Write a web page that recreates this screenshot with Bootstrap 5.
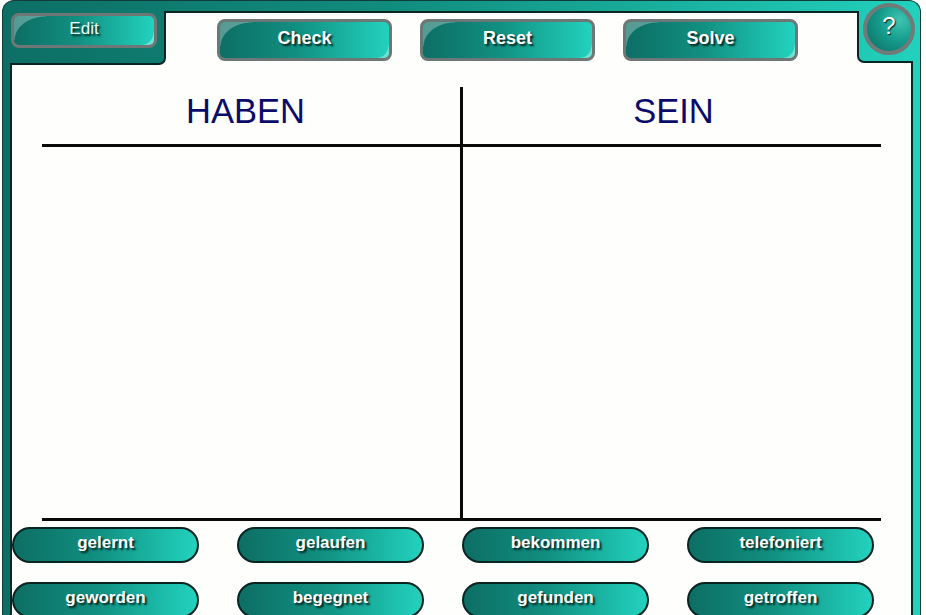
<!DOCTYPE html>
<html>

<head>
  <meta charset="utf-8">
  <meta name="viewport" content="width=device-width">
  <title>Haben oder Sein</title>
  <link href="https://cdn.jsdelivr.net/npm/bootstrap@5.3.3/dist/css/bootstrap.min.css" rel="stylesheet" />
  <style>
    html, body { height: 615px; overflow: hidden; background: #fefefc; }
    body { font-family: "Liberation Sans", Arial, sans-serif; }
    .teal-fill { background: linear-gradient(90deg, #0d6e65 0%, #118f80 45%, #22d2be 100%) fixed; }
    .game-frame { width: 919px; height: 615px; margin-left: 2px; padding: 10px 0 0 7px; border: 1px solid #123c38; border-bottom: 0; border-radius: 12px 12px 0 0; overflow: hidden; }
    .game-panel { width: 903px; height: 605px; background: #fefefc; border: 2px solid #0b2523; border-bottom: 0; }
    .tab-left { width: 156px; height: 54px; margin: -2px 0 0 -2px; padding: 2px 0 0 1px; border: solid #0b2523; border-width: 0 2px 2px 0; border-bottom-right-radius: 7px; }
    .tab-right { width: 56px; height: 52px; margin: -2px -2px 0 auto; border: solid #0b2523; border-width: 0 0 2px 2px; border-bottom-left-radius: 7px; position: relative; }
    .btn-row { padding: 6px 0 0 51px; gap: 28px; }
    .glossy { position: relative; background: linear-gradient(90deg, #0d6e65 0%, #118f80 45%, #22d2be 100%); border: 3px solid #6d7876; border-radius: 8px; color: #fff; width: 175px; height: 42px; font-size: 18px; font-weight: 700; line-height: 22px; text-align: center; text-shadow: 2px 2px 2px #02221f; padding: 0 0 4px; }
    .glossy:hover { color: #fff; }
    .glossy::before { content: ""; position: absolute; left: 0; top: 0; width: 32px; height: 24px; border-top-left-radius: 5px; background: radial-gradient(ellipse 100% 100% at 100% 100%, transparent 96%, rgba(255, 255, 255, .3) 100%); }
    .glossy::after { content: ""; position: absolute; right: 0; bottom: 0; width: 11px; height: 14px; border-bottom-right-radius: 5px; background: radial-gradient(ellipse 100% 100% at 0 0, transparent 94%, rgba(255, 255, 255, .35) 100%); }
    .glossy-edit { width: 146px; height: 35px; font-size: 17px; font-weight: 400; color: #e4fbf7; }
    .help-btn { position: absolute; top: -8px; left: 4px; width: 52px; height: 52px; border: 4px solid #707a79; border-radius: 50%; background: radial-gradient(circle at 75% 30%, #3fc4b2 0%, #159c8c 45%, #0c6a62 100%); color: #fff; font-size: 24px; font-weight: 400; line-height: 28px; padding: 0 0 6px; text-align: center; text-shadow: 1px 1px 1px #02221f; }
    .help-btn:hover { color: #fff; }
    .chart-grid { display: grid; grid-template-columns: 419px 420px; grid-template-rows: 60px 371px; width: 839px; margin: 22px 0 0 30px; border-bottom: 3px solid #0a0a0a; }
    .chart-head { border-bottom: 3px solid #0a0a0a; color: #0b0b6b; font-size: 34.5px; line-height: 48px; text-align: center; }
    .chart-head-left { padding-right: 12px; }
    .chart-head-right { padding-left: 3px; }
    .chart-split { border-left: 3px solid #0a0a0a; margin-left: -1px; }
    .word-grid { display: grid; grid-template-columns: repeat(4, 187px); gap: 19px 38px; margin: 6px 0 0 0; }
    .word-chip { height: 36px; background: linear-gradient(90deg, #0d6e65 0%, #118f80 45%, #22d2be 100%); border: 2px solid #0a2422; border-radius: 18px; color: #fff; font-size: 17px; font-weight: 700; line-height: 22px; text-align: center; text-shadow: 2px 2px 2px #02221f; padding: 0 0 4px; }
    .word-chip:hover { color: #fff; }
  </style>
</head>

<body>

  <div class="game-frame teal-fill">
    <div class="game-panel">
      <div class="d-flex">
        <div class="tab-left teal-fill">
          <button class="btn glossy glossy-edit">Edit</button>
        </div>
        <div class="d-flex btn-row">
          <button class="btn glossy">Check</button>
          <button class="btn glossy">Reset</button>
          <button class="btn glossy">Solve</button>
        </div>
        <div class="tab-right teal-fill">
          <button class="btn help-btn">?</button>
        </div>
      </div>

      <div class="chart-grid">
        <div class="chart-head chart-head-left">HABEN</div>
        <div class="chart-head chart-head-right chart-split">SEIN</div>
        <div></div>
        <div class="chart-split"></div>
      </div>

      <div class="word-grid">
        <button class="btn word-chip">gelernt</button>
        <button class="btn word-chip">gelaufen</button>
        <button class="btn word-chip">bekommen</button>
        <button class="btn word-chip">telefoniert</button>
        <button class="btn word-chip">geworden</button>
        <button class="btn word-chip">begegnet</button>
        <button class="btn word-chip">gefunden</button>
        <button class="btn word-chip">getroffen</button>
      </div>
    </div>
  </div>

  <script src="https://cdn.jsdelivr.net/npm/bootstrap@5.3.3/dist/js/bootstrap.bundle.min.js"></script>
</body>

</html>
